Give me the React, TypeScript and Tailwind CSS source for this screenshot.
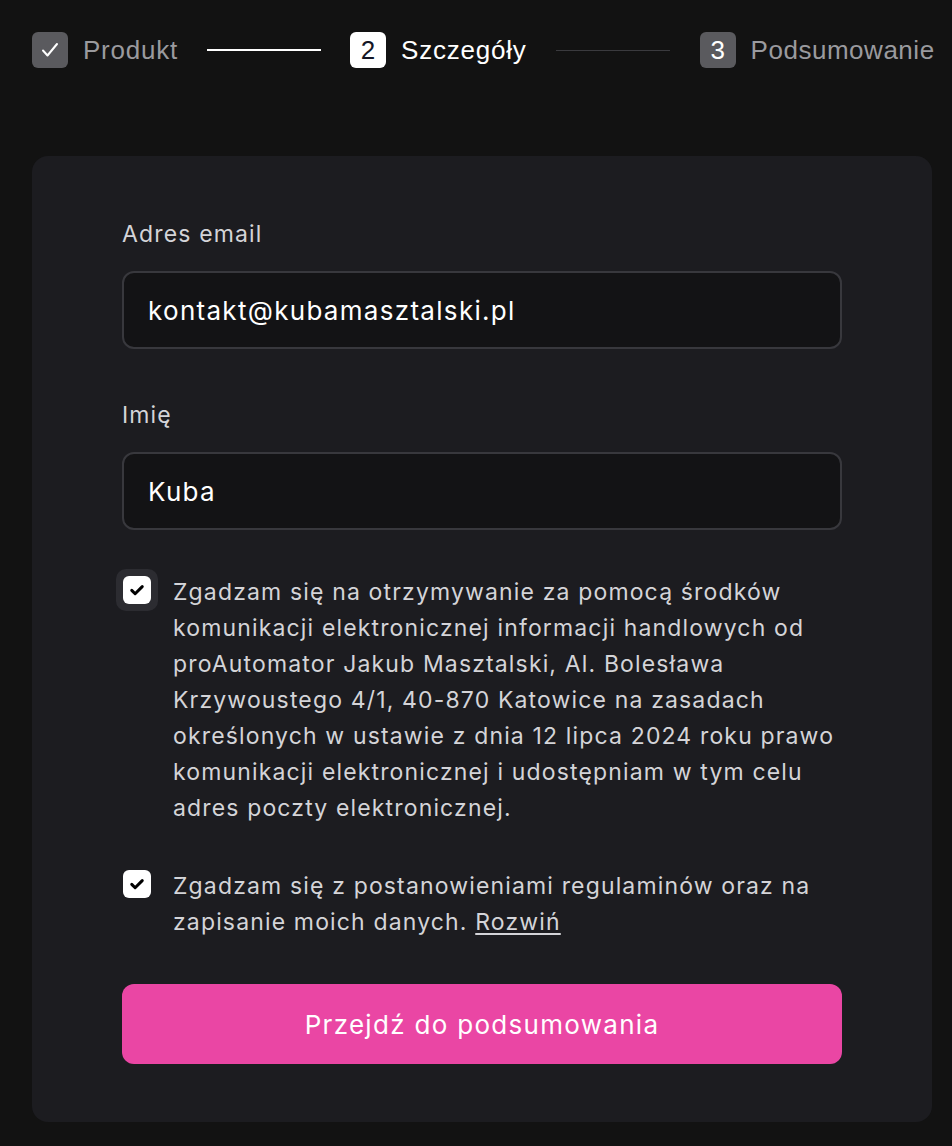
const Check = ({ className }: { className?: string }) => (
  <svg viewBox="0 0 24 24" className={className} fill="none" stroke="currentColor" strokeWidth={4} strokeLinecap="round" strokeLinejoin="round">
    <path d="M5 12.5l4.5 4.5L19 7.5" />
  </svg>
)

const Stepper = () => {
  return (
    <div className="flex items-center h-[100px] pl-8" style={{ fontFamily: "'Liberation Sans', Arial, sans-serif" }}>
      <div className="flex items-center gap-[15px]">
        <div className="w-9 h-9 rounded-md bg-[#5a5a5e] flex items-center justify-center text-white">
          <svg viewBox="0 0 24 24" className="w-6 h-6" fill="none" stroke="currentColor" strokeWidth={2} strokeLinecap="round" strokeLinejoin="round">
            <path d="M5 12.5l4.5 5L19 6" />
          </svg>
        </div>
        <span className="text-[26px] tracking-[0.03em] text-[#9a9a9e]">Produkt</span>
      </div>
      <div className="w-[114px] h-[2px] bg-white ml-[29px] mr-[29px]" />
      <div className="flex items-center gap-[15px]">
        <div className="w-9 h-9 rounded-md bg-white flex items-center justify-center text-[#141625] text-[26px]">2</div>
        <span className="text-[26px] tracking-[0.03em] text-white">Szczegóły</span>
      </div>
      <div className="w-[114px] h-px bg-[#3a3a3e] ml-[29px] mr-[30px]" />
      <div className="flex items-center gap-[15px]">
        <div className="w-9 h-9 rounded-md bg-[#5a5a5e] flex items-center justify-center text-white text-[26px]">3</div>
        <span className="text-[26px] tracking-[0.02em] text-[#9a9a9e]">Podsumowanie</span>
      </div>
    </div>
  )
}

const Field = ({ label, value }: { label: string; value: string }) => (
  <div className="flex flex-col">
    <label className="text-[23px] tracking-[0.05em] text-[#d4d4d8] leading-[28px]">{label}</label>
    <div className="mt-[23px] h-[78px] rounded-xl border-2 border-[#38383d] bg-[#131315] flex items-center px-6 text-[26px] tracking-[0.05em] text-white">
      {value}
    </div>
  </div>
)

export default function App() {
  return (
    <div className="min-h-[1146px] bg-[#121212] text-white" style={{ fontFamily: "Inter, 'Noto Sans', sans-serif" }}>
      <Stepper />
      <div className="ml-8 w-[900px] mt-[56px] rounded-2xl bg-[#1c1c20] px-[90px] pt-[64px] pb-[58px]">
        <Field label="Adres email" value="kontakt@kubamasztalski.pl" />
        <div className="h-[52px]" />
        <Field label="Imię" value="Kuba" />
        <div className="mt-[44px] flex gap-[21px]">
          <div className="shrink-0 w-[30px] h-[30px] mt-[1px] relative">
            <div className="absolute -inset-[6px] rounded-[10px] bg-[#2c2c31]" />
            <div className="relative w-[28px] h-[28px] m-px rounded-md bg-white text-black flex items-center justify-center">
              <Check className="w-[18px] h-[18px]" />
            </div>
          </div>
          <p className="text-[23px] tracking-[0.05em] leading-[36px] text-[#d4d4d8]">
            Zgadzam się na otrzymywanie za pomocą środków komunikacji elektronicznej informacji handlowych od proAutomator Jakub Masztalski, Al. Bolesława Krzywoustego 4/1, 40-870 Katowice na zasadach określonych w ustawie z dnia 12 lipca 2024 roku prawo komunikacji elektronicznej i udostępniam w tym celu adres poczty elektronicznej.
          </p>
        </div>
        <div className="mt-[42px] flex gap-[21px]">
          <div className="shrink-0 w-[30px] h-[30px] mt-[1px]">
            <div className="w-[28px] h-[28px] m-px rounded-md bg-white text-black flex items-center justify-center">
              <Check className="w-[18px] h-[18px]" />
            </div>
          </div>
          <p className="text-[23px] tracking-[0.05em] leading-[36px] text-[#d4d4d8]">
            Zgadzam się z postanowieniami regulaminów oraz na zapisanie moich danych. <span className="underline underline-offset-[3px]">Rozwiń</span>
          </p>
        </div>
        <button className="mt-[44px] w-full h-[80px] rounded-xl bg-[#ea46a4] text-white text-[26px] tracking-[0.05em]">
          Przejdź do podsumowania
        </button>
      </div>
    </div>
  )
}
